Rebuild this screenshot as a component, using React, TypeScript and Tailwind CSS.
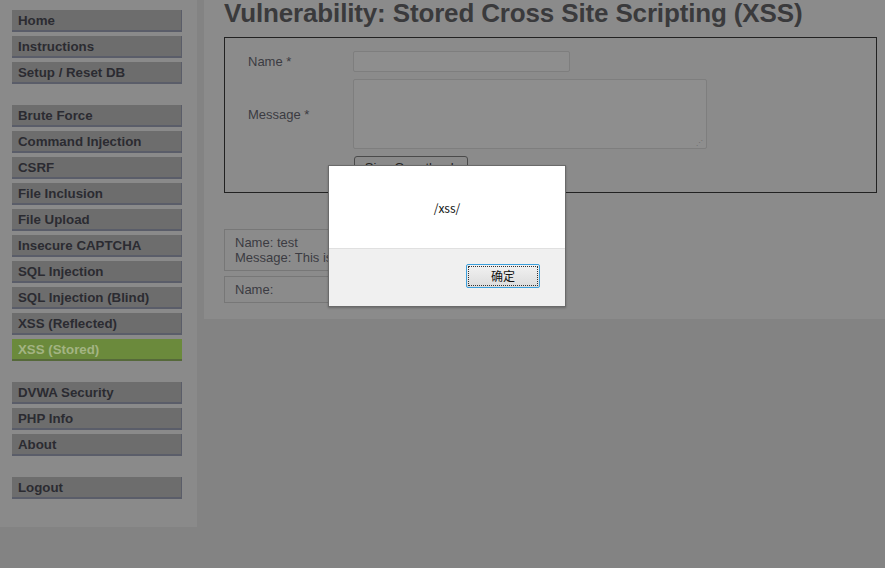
import React from "react";

const groups = [
  ["Home", "Instructions", "Setup / Reset DB"],
  [
    "Brute Force",
    "Command Injection",
    "CSRF",
    "File Inclusion",
    "File Upload",
    "Insecure CAPTCHA",
    "SQL Injection",
    "SQL Injection (Blind)",
    "XSS (Reflected)",
    "XSS (Stored)",
  ],
  ["DVWA Security", "PHP Info", "About"],
  ["Logout"],
];

const active = "XSS (Stored)";

const MenuItem = ({ label }: { label: string }) => {
  const isActive = label === active;
  return (
    <li
      className={
        isActive
          ? "h-[22px] w-[170px] border-b-2 border-[#56693a] bg-[#6b8a3c] pl-[6px] text-[13.3px] font-bold leading-[22px] text-[#a3b483]"
          : "h-[22px] w-[170px] border-b-2 border-r border-[#5a5d69] bg-[#6d6d6d] pl-[6px] text-[13.3px] font-bold leading-[22px] text-[#2b2b31]"
      }
    >
      {label}
    </li>
  );
};

export default function App() {
  return (
    <div className="relative h-[568px] w-[885px] overflow-hidden bg-[#838383] font-['Liberation_Sans',Arial,sans-serif]">
      <div className="flex items-start gap-[7px]">
        {/* menu */}
        <div className="flex w-[197px] flex-col gap-[21px] bg-[#8a8a8a] pb-[28px] pl-[12px] pt-[10px]">
          {groups.map((g, i) => (
            <ul key={i} className="flex flex-col gap-[4px]">
              {g.map((label) => (
                <MenuItem key={label} label={label} />
              ))}
            </ul>
          ))}
        </div>

        {/* main body */}
        <div className="flex flex-1 flex-col bg-[#8b8b8b] pb-[16px] pl-[20px] pr-[8px]">
          <h1 className="h-[37px] whitespace-nowrap text-[26px] font-bold leading-[26px] tracking-[-0.15px] text-[#3a3a3c]">
            Vulnerability: Stored Cross Site Scripting (XSS)
          </h1>

          <div className="h-[156px] border border-[#222] pl-[23px] pt-[13px]">
            <div className="flex items-center">
              <span className="w-[105px] pt-[1px] text-[13px] text-[#3b3b42]">Name *</span>
              <div className="h-[21px] w-[217px] rounded-[2px] border border-[#7e7e7e] bg-[#8e8e8e]" />
            </div>
            <div className="mt-[7px] flex items-center">
              <span className="w-[105px] pt-[1px] text-[13px] text-[#3b3b42]">Message *</span>
              <div className="relative h-[70px] w-[354px] rounded-[2px] border border-[#7e7e7e] bg-[#8e8e8e]">
                <span className="absolute bottom-[2px] right-[3px] text-[7px] leading-none text-[#6c6c6c]">
                  ⋰
                </span>
              </div>
            </div>
            <div className="ml-[106px] mt-[7px] flex h-[24px] w-[114px] items-center justify-center rounded-[3px] border border-[#4a4a4a] bg-[#8a8a8a] text-[13px] text-[#222]">
              Sign Guestbook
            </div>
          </div>

          <div className="mt-[36px] flex w-[320px] flex-col gap-[5px]">
            <div className="h-[42px] border border-[#777] px-[10px] pt-[5px] text-[13px] leading-[15px] text-[#3b3b42]">
              <div>Name: test</div>
              <div>Message: This is a test comment.</div>
            </div>
            <div className="h-[27px] border border-[#777] px-[10px] pt-[5px] text-[13px] leading-[15px] text-[#3b3b42]">
              <div>Name: </div>
            </div>
          </div>
        </div>
      </div>

      {/* alert dialog */}
      <div className="absolute left-[328px] top-[165px] flex h-[142px] w-[238px] flex-col border border-[#6a6a6a] bg-white font-['Noto_Sans_CJK_SC','Microsoft_YaHei',sans-serif] shadow-[0_1px_2px_rgba(0,0,0,0.25)]">
        <div className="flex h-[82px] items-center justify-center pt-[2px] text-[12px] text-[#111]">
          /xss/
        </div>
        <div className="flex flex-1 items-start justify-end border-t border-[#e0e0e0] bg-[#f0f0f0] pr-[25px] pt-[15px]">
          <div className="flex h-[24px] w-[74px] items-center justify-center rounded-[2px] border border-[#3c9fdb] bg-gradient-to-b from-[#f2f2f2] to-[#dcdcdc] p-[1px]">
            <div className="flex h-full w-full items-center justify-center border border-dotted border-[#333] text-[12px] leading-none text-[#111]">
              确定
            </div>
          </div>
        </div>
      </div>
    </div>
  );
}
